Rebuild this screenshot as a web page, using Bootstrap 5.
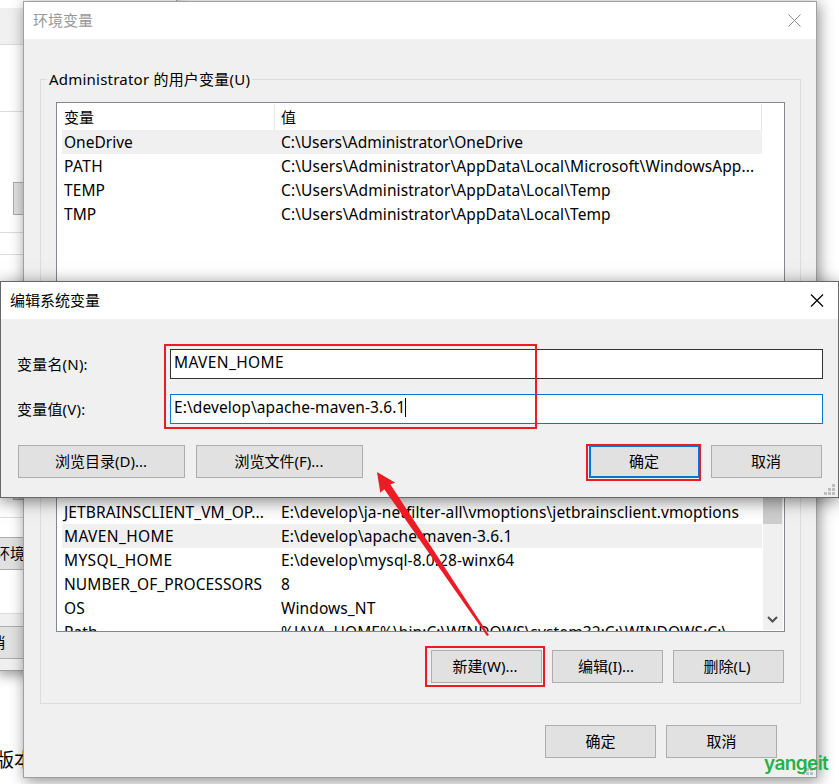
<!DOCTYPE html>
<html lang="zh-CN">
<head>
<meta charset="utf-8">
<meta name="viewport" content="width=device-width, initial-scale=1">
<title>环境变量</title>
<link href="https://cdn.jsdelivr.net/npm/bootstrap@5.3.0/dist/css/bootstrap.min.css" rel="stylesheet">
<style>
body{width:839px;height:784px;background:#fff;color:#000;font:15px/24px "Noto Sans","Noto Sans CJK SC",sans-serif}
.desk{width:839px;height:784px}
.win{background:#f0f0f0;border:1px solid #a0a0a0}
.win-back{left:-4px;top:-4px;width:181px;height:675px;box-shadow:2px 4px 12px rgba(0,0,0,.4)}
.win-env{left:23px;top:1px;width:794px;height:777px;box-shadow:2px 3px 14px rgba(0,0,0,.45)}
.win-edit{left:0;top:281px;width:839px;height:217px;border-color:#686868;box-shadow:0 3px 16px rgba(0,0,0,.5)}
.bar{height:37px;background:#fff}
.bar>span{padding-bottom:2px}
.bar-env{color:#999;padding:0 15px 0 9px}
.bar-edit{padding:0 13px 0 9px}
.wbtn{background:#e1e1e1;border:1px solid #adadad;color:#000;line-height:24px;padding:0 2px 2px 0;width:111px;height:33px;white-space:nowrap}
.wbtn.wide{width:167px}
.wbtn.focus-on{border:2px solid #0078d7}
.group{border:1px solid #dcdcdc;padding:22px 15px 0}
.group-user{height:313px}
.group-sys{height:303px;margin-top:9px}
.legend-line{left:6px;top:-13px;padding:0 2px;background:#f0f0f0;letter-spacing:.22px}
.list{border:1px solid #828790;background:#fff}
.list .c2{white-space:nowrap}
.list-user{height:270px}
.list-sys{height:208px}
.lhead{height:27px;padding-top:2px;margin-right:22px}
.c1{width:218px;padding-left:7px;flex:none}
.c2{padding-left:6px}
.lhead>div{border-right:1px solid #e5e5e5;height:26px;margin-top:-1px;padding-top:1px}
.lrow{height:24px;margin:0 22px 0 5px;line-height:24px;font-size:15.5px;letter-spacing:.09px}
.lrow .c1{width:213px;padding-left:2px}
.lrow .c2{padding-left:6px}
.lrow.sel{background:#f0f0f0}
.ls-0{letter-spacing:0}
.ls-home{letter-spacing:.38px}
.rows-sys{min-width:0}
.rows-sys .lrow{margin-right:0}
.sbar{width:20px;background:#f0f0f0;margin:1px}
.thumb{height:98px;background:#cdcdcd;width:19px}
.sys-btns{gap:10px;margin-top:18px;padding-right:1px}
.sys-btns .wbtn{padding-right:3px}
.env-btns{gap:10px;margin-top:21px;padding-right:24px}
.env-btns .wbtn{padding-right:0}
.body-env{padding:40px 15px 0 16px}
.edit-body{padding:30px 16px 0 16px}
.second{margin-top:15px}
.edit-btns{gap:11px;margin:21px 0 0 1px}
.edit-btns .wbtn{padding-right:1px}
.grip{right:3px;bottom:2px}
.field{height:30px;background:#fff;border:1px solid #333;width:653px;flex:none;padding-left:3px;line-height:25px;font-size:15.5px}
.field.act{border-color:#0078d7;letter-spacing:.09px}
.caret{width:1px;height:19px;background:#000;display:inline-block;vertical-align:-4px}
.flabel{width:153px;flex:none;padding-top:3px;letter-spacing:.2px}
.mark-box{border:2px solid #ed1c24}
.mb1{left:164px;top:344px;width:373px;height:85px}
.mb2{left:586px;top:444px;width:115px;height:37px}
.mb3{left:425px;top:646px;width:120px;height:41px}
.wm{left:764px;top:750px;font:600 19px/28px Inter,sans-serif;color:#22b14c;letter-spacing:-.6px}
.doc-text{left:-5px;top:748px;font-size:19px}
.b-head{height:11px;background:#fff}
.b-strip{height:37px;border-bottom:1px solid #dcdcdc}
.b-page{height:569px;background:#fff;border-bottom:1px solid #dcdcdc}
.b-line{border-bottom:1px solid #dcdcdc}
.bl1{height:67px}.bl2{height:121px;padding:70px 0 0 16px}.bl3{height:22px}.bl4{height:263px;padding:212px 0 0 16px}
.b-env{margin:19px 0 0 -15px;padding-left:12px}
.b-foot{padding:12px 0 0 0}
.b-cancel{margin-left:-61px}
</style>
<script src="https://cdn.jsdelivr.net/npm/bootstrap@5.3.0/dist/js/bootstrap.bundle.min.js"></script>
</head>
<body class="overflow-hidden">
<main class="desk position-relative overflow-hidden">
  <section class="win win-back position-absolute">
    <div class="b-head"></div><div class="b-strip"></div>
    <div class="b-page">
      <div class="b-line bl1"></div>
      <div class="b-line bl2"><div class="wbtn"></div></div>
      <div class="b-line bl3"></div>
      <div class="b-line bl4"><div class="wbtn"></div></div>
      <div class="wbtn b-env d-flex align-items-center">环境</div>
    </div>
    <div class="b-foot"><div class="wbtn b-cancel d-flex align-items-center justify-content-center">取消</div></div>
  </section>
  <div class="doc-text position-absolute">版本</div>

  <section class="win win-env position-absolute">
    <header class="bar bar-env d-flex align-items-center justify-content-between"><span>环境变量</span>
      <svg width="13" height="13" viewBox="0 0 13 13" stroke="#8c8c8c" fill="none"><path d="M.5.5l12 12M12.5.5l-12 12"/></svg></header>
    <div class="body-env">
      <div class="group group-user position-relative">
        <span class="legend-line position-absolute">Administrator 的用户变量(U)</span>
        <div class="list list-user">
          <div class="lhead d-flex"><div class="c1">变量</div><div class="c2 flex-fill">值</div></div>
          <div class="lrow sel ls-0 d-flex"><div class="c1">OneDrive</div><div class="c2">C:\Users\Administrator\OneDrive</div></div>
          <div class="lrow d-flex"><div class="c1 ls-home">PATH</div><div class="c2">C:\Users\Administrator\AppData\Local\Microsoft\WindowsApp...</div></div>
          <div class="lrow d-flex"><div class="c1">TEMP</div><div class="c2">C:\Users\Administrator\AppData\Local\Temp</div></div>
          <div class="lrow d-flex"><div class="c1">TMP</div><div class="c2">C:\Users\Administrator\AppData\Local\Temp</div></div>
        </div>
      </div>
      <div class="group group-sys">
        <div class="list list-sys d-flex overflow-hidden">
          <div class="flex-fill rows-sys">
            <div class="lhead"></div><div class="lrow"></div>
            <div class="lrow d-flex"><div class="c1">JETBRAINS_CLIENT_VM_OP...</div><div class="c2">E:\develop\ja-netfilter-all\vmoptions\jetbrains_client.vmoptions</div></div>
            <div class="lrow d-flex"><div class="c1">JETBRAINSCLIENT_VM_OP...</div><div class="c2">E:\develop\ja-netfilter-all\vmoptions\jetbrainsclient.vmoptions</div></div>
            <div class="lrow sel d-flex"><div class="c1 ls-home">MAVEN_HOME</div><div class="c2">E:\develop\apache-maven-3.6.1</div></div>
            <div class="lrow d-flex"><div class="c1 ls-home">MYSQL_HOME</div><div class="c2">E:\develop\mysql-8.0.28-winx64</div></div>
            <div class="lrow d-flex"><div class="c1">NUMBER_OF_PROCESSORS</div><div class="c2">8</div></div>
            <div class="lrow d-flex"><div class="c1">OS</div><div class="c2">Windows_NT</div></div>
            <div class="lrow d-flex"><div class="c1">Path</div><div class="c2">%JAVA_HOME%\bin;C:\WINDOWS\system32;C:\WINDOWS;C:\...</div></div>
          </div>
          <div class="sbar d-flex flex-column justify-content-between">
            <div class="thumb"></div>
            <svg class="mb-1" width="18" height="13" viewBox="0 0 18 13" fill="none" stroke="#505050" stroke-width="2"><path d="M5 4l4.500 4.500L14 4"/></svg>
          </div>
        </div>
        <div class="d-flex justify-content-end sys-btns"><div class="wbtn d-flex align-items-center justify-content-center">新建(W)...</div><div class="wbtn d-flex align-items-center justify-content-center">编辑(I)...</div><div class="wbtn d-flex align-items-center justify-content-center">删除(L)</div></div>
      </div>
      <div class="d-flex justify-content-end env-btns"><div class="wbtn d-flex align-items-center justify-content-center">确定</div><div class="wbtn d-flex align-items-center justify-content-center">取消</div></div>
    </div>
    <svg class="grip position-absolute" width="11" height="11" fill="#bfbfbf"><path d="M8 0h3v3H8zM4 4h3v3H4zM8 4h3v3H8zM0 8h3v3H0zM4 8h3v3H4zM8 8h3v3H8z"/></svg>
  </section>

  <section class="win win-edit position-absolute">
    <header class="bar bar-edit d-flex align-items-center justify-content-between"><span>编辑系统变量</span>
      <svg width="15" height="13" viewBox="0 0 15 13" stroke="#000" stroke-width="1.200" fill="none"><path d="M1 .5l12 12M13 .5l-12 12"/></svg></header>
    <div class="edit-body">
      <div class="d-flex"><div class="flabel">变量名(N):</div><div class="field ls-home">MAVEN_HOME</div></div>
      <div class="d-flex second"><div class="flabel">变量值(V):</div><div class="field act">E:\develop\apache-maven-3.6.1<i class="caret"></i></div></div>
      <div class="d-flex edit-btns"><div class="wbtn wide d-flex align-items-center justify-content-center">浏览目录(D)...</div><div class="wbtn wide d-flex align-items-center justify-content-center">浏览文件(F)...</div><div class="wbtn focus-on ms-auto d-flex align-items-center justify-content-center">确定</div><div class="wbtn d-flex align-items-center justify-content-center">取消</div></div>
    </div>
    <svg class="grip position-absolute" width="11" height="11" fill="#bfbfbf"><path d="M8 0h3v3H8zM4 4h3v3H4zM8 4h3v3H8zM0 8h3v3H0zM4 8h3v3H4zM8 8h3v3H8z"/></svg>
  </section>

  <div class="mark-box mb1 position-absolute"></div>
  <div class="mark-box mb2 position-absolute"></div>
  <div class="mark-box mb3 position-absolute"></div>
  <svg class="position-absolute top-0 start-0" width="839" height="784" fill="#ed1c24"><path d="M377 472l18.300 10.700-5 1.600L489 635l-2 1-102.700-146.700-4 3.400z"/></svg>
  <div class="wm position-absolute">yangeit</div>
</main>
</body>
</html>
